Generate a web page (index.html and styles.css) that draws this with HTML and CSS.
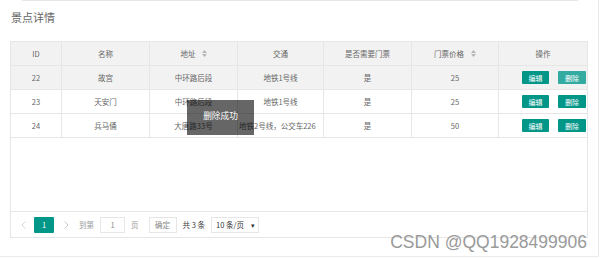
FILE: index.html
```html
<!DOCTYPE html>
<html lang="zh">
<head>
<meta charset="utf-8">
<title>景点详情</title>
<link rel="stylesheet" href="styles.css">
</head>
<body>
<div class="card">
  <div class="topline"></div>
  <div class="title">景点详情</div>
  <div class="tbox">
    <div class="row head">
      <div class="c">ID</div>
      <div class="c">名称</div>
      <div class="c">地址<span class="sort"><svg width="5" height="7" viewBox="0 0 5 7"><path d="M0 3 L2.5 0 L5 3 Z M0 4 L2.5 7 L5 4 Z" fill="#b5b5b5"/></svg></span></div>
      <div class="c">交通</div>
      <div class="c">是否需要门票</div>
      <div class="c">门票价格<span class="sort wide"><svg width="5" height="7" viewBox="0 0 5 7"><path d="M0 3 L2.5 0 L5 3 Z M0 4 L2.5 7 L5 4 Z" fill="#b5b5b5"/></svg></span></div>
      <div class="c last">操作</div>
    </div>
    <div class="row hover">
      <div class="c">22</div>
      <div class="c">故宫</div>
      <div class="c">中环路后段</div>
      <div class="c">地铁1号线</div>
      <div class="c">是</div>
      <div class="c">25</div>
      <div class="c last ops"><span class="btn">编辑</span><span class="btn del hov">删除</span></div>
    </div>
    <div class="row">
      <div class="c">23</div>
      <div class="c">天安门</div>
      <div class="c">中环路后段</div>
      <div class="c">地铁1号线</div>
      <div class="c">是</div>
      <div class="c">25</div>
      <div class="c last ops"><span class="btn">编辑</span><span class="btn del">删除</span></div>
    </div>
    <div class="row">
      <div class="c">24</div>
      <div class="c">兵马俑</div>
      <div class="c">大唐路33号</div>
      <div class="c clip">地铁2号线，公交车226</div>
      <div class="c">是</div>
      <div class="c">50</div>
      <div class="c last ops"><span class="btn">编辑</span><span class="btn del">删除</span></div>
    </div>
    <div class="empty"></div>
    <div class="pager">
      <span class="arrow prev"><svg width="5" height="8" viewBox="0 0 5 8"><path d="M4.5 0.5 L1 4 L4.5 7.5" fill="none" stroke="#d2d2d2" stroke-width="0.9"/></svg></span>
      <span class="cur">1</span>
      <span class="arrow next"><svg width="5" height="8" viewBox="0 0 5 8"><path d="M0.5 0.5 L4 4 L0.5 7.5" fill="none" stroke="#c2c2c2" stroke-width="0.9"/></svg></span>
      <span class="lbl goto">到第</span>
      <span class="inp">1</span>
      <span class="lbl page">页</span>
      <span class="ok">确定</span>
      <span class="count">共 3 条</span>
      <span class="sel">10 条/页<span class="caret">▾</span></span>
    </div>
  </div>
  <div class="toast">删除成功</div>
  <div class="mark">CSDN @QQ1928499906</div>
</div>
</body>
</html>
```
FILE: styles.css
```css
html, body {
  margin: 0;
  padding: 0;
  background: #fff;
}
body {
  font-family: "Noto Sans CJK SC", "Noto Sans", sans-serif;
  color: #666;
}
.card {
  position: relative;
  width: 598px;
  height: 256px;
  border-right: 1px solid #ebebeb;
  border-bottom: 1px solid #ebebeb;
  background: #fff;
}
.topline {
  margin-left: 22px;
  width: 556px;
  height: 1px;
  background: #e6e6e6;
}
.title {
  height: 32px;
  line-height: 32px;
  padding-left: 11px;
  font-size: 11px;
  color: #666;
  margin-bottom: 8px;
}
.tbox {
  margin-left: 10px;
  width: 578px;
  height: 197px;
  box-sizing: border-box;
  border: 1px solid #e6e6e6;
  display: flex;
  flex-direction: column;
}
.row {
  display: grid;
  grid-template-columns: 51px 88px 88px 86px 88px 87px 88px;
  height: 24px;
  box-sizing: border-box;
  border-bottom: 1px solid #e6e6e6;
  font-size: 7.5px;
  color: #666;
}
.row.head, .row.hover {
  background: #f2f2f2;
}
.c {
  display: flex;
  align-items: center;
  justify-content: center;
  border-right: 1px solid #e6e6e6;
  white-space: nowrap;
  overflow: hidden;
}
.c.last {
  border-right: none;
  overflow: visible;
}
.c.clip {
  justify-content: flex-start;
  padding-left: 1px;
}
.sort {
  display: inline-flex;
  margin-left: 6px;
}
.sort.wide {
  margin-left: 7px;
}
.ops {
  justify-content: flex-start;
  padding-left: 23px;
}
.btn {
  display: inline-flex;
  align-items: center;
  justify-content: center;
  width: 27px;
  height: 13px;
  background: #009688;
  color: #fff;
  font-size: 7px;
  border-radius: 1px;
}
.btn.del {
  margin-left: 9px;
  width: 28px;
}
.btn.hov {
  background: #33aba0;
}
.empty {
  flex: 1;
}
.pager {
  height: 26px;
  box-sizing: border-box;
  border-top: 1px solid #e6e6e6;
  display: flex;
  align-items: center;
  font-size: 7.5px;
  color: #999;
}
.arrow {
  display: inline-flex;
}
.prev {
  margin-left: 10px;
}
.cur {
  margin-left: 8px;
  width: 20px;
  height: 16px;
  background: #009688;
  color: #fff;
  display: inline-flex;
  align-items: center;
  justify-content: center;
  border-radius: 1px;
}
.next {
  margin-left: 10px;
}
.goto {
  margin-left: 10px;
}
.inp {
  margin-left: 6px;
  width: 25px;
  height: 16px;
  box-sizing: border-box;
  border: 1px solid #e6e6e6;
  display: inline-flex;
  align-items: center;
  justify-content: center;
  color: #888;
}
.page {
  margin-left: 6px;
}
.ok {
  margin-left: 10px;
  width: 28px;
  height: 16px;
  box-sizing: border-box;
  border: 1px solid #e6e6e6;
  display: inline-flex;
  align-items: center;
  justify-content: center;
  color: #888;
}
.count {
  margin-left: 6px;
  color: #444;
}
.sel {
  margin-left: 6px;
  width: 48px;
  height: 16px;
  box-sizing: border-box;
  border: 1px solid #e6e6e6;
  display: inline-flex;
  align-items: center;
  padding-left: 4px;
  color: #333;
}
.caret {
  margin-left: auto;
  margin-right: 3px;
  font-size: 7px;
  color: #333;
}
.toast {
  position: absolute;
  left: 187px;
  top: 100px;
  width: 67px;
  height: 35px;
  background: rgba(0, 0, 0, 0.6);
  color: #fff;
  font-size: 8.7px;
  display: flex;
  align-items: center;
  justify-content: center;
  padding-bottom: 4px;
  box-sizing: border-box;
}
.mark {
  position: absolute;
  right: 11px;
  top: 232px;
  font-family: "Liberation Sans", Arial, sans-serif;
  font-size: 17.5px;
  line-height: 20px;
  color: #9a9a9a;
  white-space: nowrap;
}
```
